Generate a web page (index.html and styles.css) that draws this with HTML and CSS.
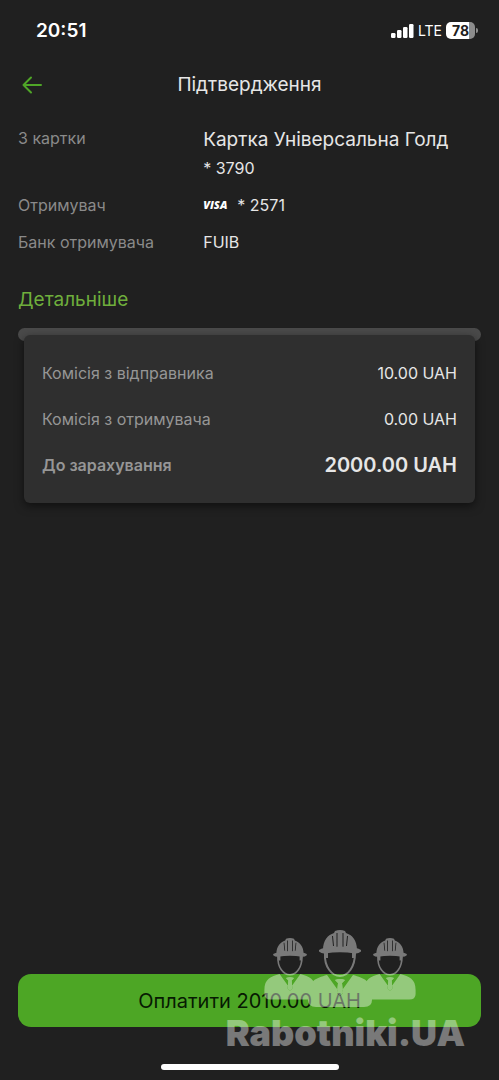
FILE: index.html
```html
<!DOCTYPE html>
<html lang="uk">
<head>
  <meta charset="utf-8">
  <meta name="viewport" content="width=device-width, initial-scale=1">
  <title>Підтвердження</title>
  <link rel="stylesheet" href="styles.css">
</head>
<body>
  <div class="screen">
    <div class="status">
      <time class="status-time">20:51</time>
      <div class="status-right">
        <svg class="signal" width="23" height="14" viewBox="0 0 23 14" aria-hidden="true">
          <rect x="0" y="9" width="4.500" height="5" rx="1.200"/>
          <rect x="6" y="6" width="4.500" height="8" rx="1.200"/>
          <rect x="12" y="3" width="4.500" height="11" rx="1.200"/>
          <rect x="18" y="0" width="4.500" height="14" rx="1.200"/>
        </svg>
        <span class="network">LTE</span>
        <span class="battery"><span class="battery-body">78</span><span class="battery-tip"></span></span>
      </div>
    </div>

    <header class="header">
      <button class="back" type="button" aria-label="Назад">
        <svg width="20" height="18" viewBox="0 0 20 18" aria-hidden="true">
          <path d="M19 9H1.500M9 1.500L1.500 9L9 16.500"/>
        </svg>
      </button>
      <h1 class="title">Підтвердження</h1>
    </header>

    <main class="content">
      <dl class="details">
        <dt>З картки</dt>
        <dd><span class="card-name">Картка Універсальна Голд</span>* 3790</dd>
        <dt>Отримувач</dt>
        <dd class="recipient">
          <span class="visa">VISA</span>
          <span>* 2571</span>
        </dd>
        <dt>Банк отримувача</dt>
        <dd>FUIB</dd>
      </dl>
      <a class="more" href="#receipt">Детальніше</a>

      <section class="receipt" id="receipt">
        <div class="slot"></div>
        <dl class="paper">
          <div class="line"><dt>Комісія з відправника</dt><dd>10.00 UAH</dd></div>
          <div class="line"><dt>Комісія з отримувача</dt><dd>0.00 UAH</dd></div>
          <div class="line total"><dt>До зарахування</dt><dd>2000.00 UAH</dd></div>
        </dl>
      </section>
    </main>

    <footer class="footer">
      <button class="pay" type="button">Оплатити 2010.00 UAH</button>
      <div class="home"></div>
      <div class="watermark">
        <svg class="workers" width="154" height="80" viewBox="0 0 154 80" aria-hidden="true">
          <defs>
            <g id="worker">
              <path fill-rule="evenodd" d="M-17 20C-17 10-12 5-6 3L-5 1Q0-1 5 1L6 3C12 5 17 10 17 20ZM-3.500 3V17H-2.500V3ZM2.500 3V17H3.500V3ZM-8 6L-7 16H-6L-7 6ZM8 6L7 16H6L7 6Z"/>
              <path d="M-21 20Q-18 18-15 18Q0 15 15 18Q18 18 21 20V21.500Q18 24 15 23.500Q0 21-15 23.500Q-18 24-21 21.500Z"/>
              <path d="M-16 22H-12V28H-14.500Z M16 22H12V28H14.500Z"/>
              <path class="face" d="M-15 23C-16 37-8 46 0 46C8 46 15 37 15 23"/>
              <path fill-rule="evenodd" d="M-13 45C-24 48-32 51-32 65V70Q-32 77-24 77H24Q32 77 32 70V65C32 51 24 48 13 45L0 63ZM-5 50Q0 48 5 50L2 53L3 63L0 66L-3 63L-2 53Z"/>
              <path d="M-5 50Q0 48 5 50L2 53L3 63L0 66L-3 63L-2 53Z"/>
            </g>
          </defs>
          <use href="#worker" transform="translate(27 9) scale(.8)"/>
          <use href="#worker" transform="translate(127 9) scale(.8)"/>
          <use href="#worker" transform="translate(77 1)"/>
        </svg>
        <span class="brand">Rabotniki.UA</span>
      </div>
    </footer>
  </div>
</body>
</html>
```
FILE: styles.css
```css
* {
  box-sizing: border-box;
}

body {
  margin: 0;
  background: #202020;
  color: #e6e6e6;
  font: 16px/24px Inter, "Noto Sans", sans-serif;
}

button {
  border: 0;
  font-family: inherit;
  cursor: pointer;
}

dl,
dd,
h1 {
  margin: 0;
}

.screen {
  display: flex;
  flex-direction: column;
  min-height: 100vh;
}

.status {
  display: flex;
  align-items: center;
  justify-content: space-between;
  height: 61px;
  padding: 0 21px 0 36px;
  color: #fff;
}

.status-time {
  font-size: 19px;
  font-weight: 600;
}

.status-right {
  display: flex;
  align-items: center;
  gap: 4px;
}

.signal {
  fill: #fff;
}

.network {
  font-size: 14px;
}

.battery {
  display: flex;
  align-items: center;
  gap: 1px;
}

.battery-body {
  width: 29px;
  height: 17px;
  border-radius: 5px;
  background: linear-gradient(90deg, #fff 78%, #8c8c8c 78%);
  color: #202020;
  font-size: 14px;
  font-weight: 700;
  line-height: 17px;
  text-align: center;
}

.battery-tip {
  width: 2px;
  height: 5px;
  border-radius: 0 2px 2px 0;
  background: #8c8c8c;
}

.header {
  display: grid;
  grid-template-columns: 48px 1fr 48px;
  align-items: center;
  height: 48px;
}

.back {
  display: flex;
  padding: 8px 0 8px 22px;
  background: none;
}

.back svg {
  fill: none;
  stroke: #4fa527;
  stroke-width: 2;
  stroke-linecap: round;
  stroke-linejoin: round;
}

.title {
  font-size: 19px;
  font-weight: 400;
  text-align: center;
}

.content {
  flex: 1;
  padding: 17px 18px 0;
}

.details {
  display: grid;
  grid-template-columns: 2fr 3fr;
  row-gap: 13px;
}

.details dt {
  color: #8a8a8a;
}

.card-name {
  display: block;
  padding: 2px 0 4px;
  font-size: 19px;
}

.recipient {
  display: flex;
  align-items: center;
  gap: 10px;
}

.visa {
  color: #fff;
  font: italic 800 11px/12px "Open Sans", sans-serif;
}

.more {
  display: inline-block;
  margin-top: 34px;
  color: #6fae3c;
  font-size: 19px;
  text-decoration: none;
}

.receipt {
  margin-top: 16px;
}

.slot {
  height: 13px;
  border-radius: 7px;
  background: #4a4a4a;
}

.paper {
  position: relative;
  display: flex;
  flex-direction: column;
  gap: 22px;
  margin: -6px 6px 0;
  padding: 26px 18px;
  border-radius: 6px;
  background: #2f2f2f;
  box-shadow: 0 3px 10px #0008;
}

.line {
  display: flex;
  justify-content: space-between;
}

.line dt {
  color: #969696;
}

.total {
  font-weight: 600;
}

.total dd {
  font-size: 20px;
}

.footer {
  position: relative;
  display: flex;
  flex-direction: column;
  align-items: center;
  padding: 0 18px 10px;
}

.pay {
  width: 100%;
  height: 53px;
  border-radius: 13px;
  background: #4da625;
  color: #071a02;
  font-size: 20px;
}

.home {
  width: 178px;
  height: 6px;
  margin-top: 37px;
  border-radius: 3px;
  background: #fff;
}

.watermark {
  position: absolute;
  right: 34px;
  bottom: 29px;
  display: flex;
  flex-direction: column;
  align-items: center;
  gap: 6px;
  opacity: .4;
  pointer-events: none;
}

.workers {
  margin-right: 10px;
  fill: #fff;
}

.face {
  fill: none;
  stroke: #fff;
  stroke-width: 2;
}

.brand {
  color: #fff;
  font-size: 36px;
  font-weight: 900;
  line-height: 36px;
}
```
